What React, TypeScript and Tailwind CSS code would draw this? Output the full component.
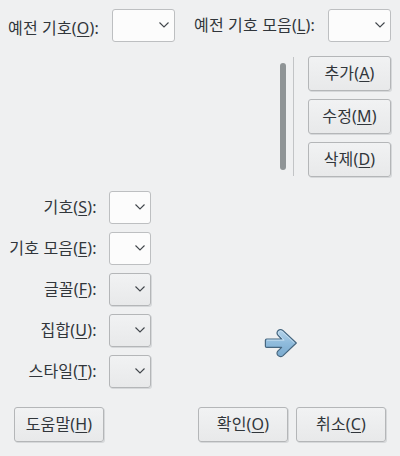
import React from "react";

function Mnemonic({ text, k, colon = false }: { text: string; k: string; colon?: boolean }) {
  return (
    <span className="whitespace-nowrap">
      {text}(<span className="underline decoration-1 underline-offset-2">{k}</span>){colon && ":"}
    </span>
  );
}

function Combo({ raised = false, wide = false }: { raised?: boolean; wide?: boolean }) {
  return (
    <div
      className={`flex h-[33px] shrink-0 items-center justify-end rounded-[3px] border pr-[5px] pb-px ${wide ? "w-[63px]" : "w-[42px]"} ${
        raised
          ? "border-[#b4b6b8] bg-linear-to-b from-[#f1f2f3] to-[#e8e9ea] shadow-[1px_1px_0_#d6d8da]"
          : "border-[#bdbfc1] bg-[#fcfcfc]"
      }`}
    >
      <svg width="10" height="6" viewBox="0 0 10 6" fill="none" stroke="#41464b" strokeWidth="1.1">
        <path d="M0.5 0.5 L5 5 L9.5 0.5" />
      </svg>
    </div>
  );
}

function Button({ text, k, small = false }: { text: string; k: string; small?: boolean }) {
  return (
    <button
      className={`flex h-[35px] shrink-0 items-center justify-center rounded-[3px] border border-[#b4b6b8] bg-linear-to-b from-[#f1f2f3] to-[#e8e9ea] pb-[2px] shadow-[1px_1px_0_#d6d8da] ${small ? "w-[83px]" : "w-[90px]"}`}
    >
      <Mnemonic text={text} k={k} />
    </button>
  );
}

const fields = [
  { text: "기호", k: "S", raised: false },
  { text: "기호 모음", k: "E", raised: false },
  { text: "글꼴", k: "F", raised: true },
  { text: "집합", k: "U", raised: true },
  { text: "스타일", k: "T", raised: true },
];

export default function App() {
  return (
    <div className="flex h-[456px] w-[400px] flex-col overflow-hidden bg-[#eff0f1] font-['Noto_Sans','Noto_Sans_CJK_KR',sans-serif] text-[16px] leading-6 tracking-[0.16px] text-[#31363b]">
      <div className="flex h-[56px] shrink-0 items-start pt-[9px] pr-[9px] pl-2">
        <div className="w-[104px] pt-[7px]">
          <Mnemonic text="예전 기호" k="O" colon />
        </div>
        <Combo wide />
        <div className="ml-[19px] w-[134px] pt-1">
          <Mnemonic text="예전 기호 모음" k="L" colon />
        </div>
        <Combo wide />
      </div>

      <div className="flex h-[135px] shrink-0 justify-end pr-[9px]">
        <div className="mt-[7px] h-[107px] w-[6px] rounded-full bg-[#8f9496]" />
        <div className="mt-px mr-[14px] ml-[7px] h-[119px] w-px bg-[#c2c4c6]" />
        <div className="flex flex-col gap-2">
          <Button text="추가" k="A" small />
          <Button text="수정" k="M" small />
          <Button text="삭제" k="D" small />
        </div>
      </div>

      <div className="flex h-[216px] shrink-0">
        <div className="flex w-[151px] flex-col gap-2">
          {fields.map((f) => (
            <div key={f.k} className="flex h-[33px] items-center justify-end gap-[12.4px]">
              <div className="pb-[2px]">
                <Mnemonic text={f.text} k={f.k} colon />
              </div>
              <Combo raised={f.raised} />
            </div>
          ))}
        </div>
        <svg className="mt-[137px] ml-[113px]" width="34" height="31" viewBox="0 0 34 31">
          <defs>
            <linearGradient id="arrowFill" x1="0" y1="0" x2="0" y2="1">
              <stop offset="0" stopColor="#b4d3ea" />
              <stop offset="0.5" stopColor="#8fbbdc" />
              <stop offset="1" stopColor="#7aaace" />
            </linearGradient>
          </defs>
          <path
            d="M2.7 11 H17.6 L13.8 7 Q12.2 4.8 13.9 2.8 Q16.4 0.4 19.1 2.6 L32.3 15 L19.1 27.6 Q16.4 29.8 13.9 27.4 Q12.2 25.3 13.8 23.2 L17.6 19.4 H2.7 Q1.4 19.4 1.4 18.2 V12.2 Q1.4 11 2.7 11 Z"
            fill="url(#arrowFill)"
            stroke="#46667f"
            strokeWidth="1.2"
            strokeLinejoin="round"
          />
          <path d="M3 12.2 H20.2 L14.8 6.4 Q13.8 4.9 14.9 3.6 Q16.5 2.2 18.3 3.6 L30.5 15" fill="none" stroke="#c6dff0" strokeWidth="0.9" />
        </svg>
      </div>

      <div className="flex items-start pr-[14px] pl-[14px]">
        <Button text="도움말" k="H" />
        <div className="flex-1" />
        <div className="flex gap-2">
          <Button text="확인" k="O" />
          <Button text="취소" k="C" />
        </div>
      </div>
    </div>
  );
}
